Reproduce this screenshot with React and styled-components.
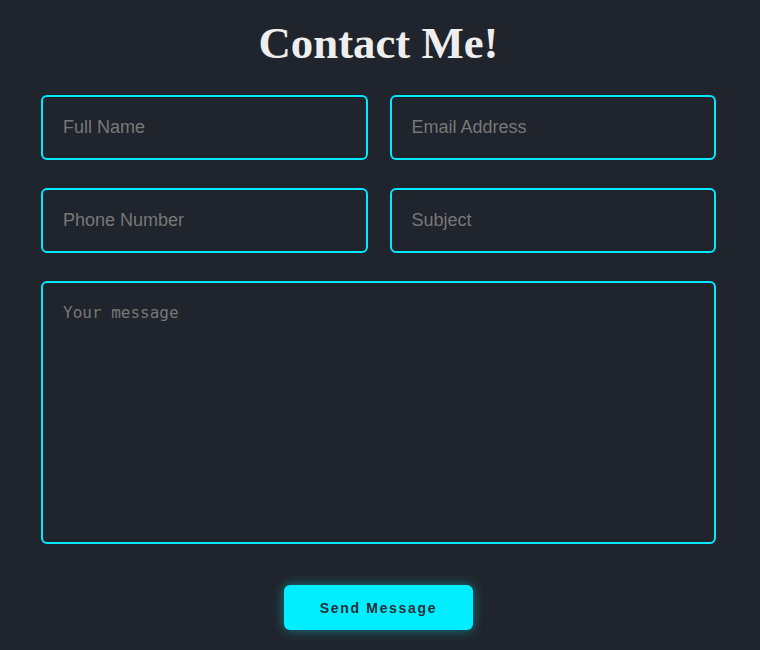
import React from "react";
import styled, { createGlobalStyle } from "styled-components";

const GlobalStyle = createGlobalStyle`
  html, body {
    margin: 0;
    padding: 0;
    background: #20242c;
  }
`;

const Page = styled.div`
  min-height: 650px;
  box-sizing: border-box;
  padding: 0 44px 0 41px;
  background: #20242c;
  overflow: hidden;
`;

const Title = styled.h1`
  margin: 18px 0 26px;
  text-align: center;
  font-family: "Liberation Serif", "Times New Roman", serif;
  font-size: 44.8px;
  line-height: 51px;
  font-weight: 700;
  color: #eeeeee;
`;

const Form = styled.form`
  display: flex;
  flex-direction: column;
  gap: 28px;
`;

const Row = styled.div`
  display: grid;
  grid-template-columns: 1fr 1fr;
  gap: 22px;
`;

const fieldBase = `
  box-sizing: border-box;
  width: 100%;
  border: 2px solid #00eaff;
  border-radius: 6px;
  background: transparent;
  color: #e0e0e0;
  outline: none;
  padding: 20px;
  margin: 0;
  &::placeholder {
    color: #787878;
    opacity: 1;
  }
`;

const Input = styled.input`
  ${fieldBase}
  height: 65px;
  font-family: "Liberation Sans", Arial, sans-serif;
  font-size: 18px;
`;

const TextArea = styled.textarea`
  ${fieldBase}
  display: block;
  height: 263px;
  resize: none;
  font-family: "DejaVu Sans Mono", monospace;
  font-size: 16px;
  line-height: 20px;
`;

const Actions = styled.div`
  display: flex;
  justify-content: center;
  padding-top: 13px;
`;

const SendButton = styled.button`
  width: 189px;
  height: 45px;
  border: none;
  border-radius: 6px;
  background: #00eeff;
  color: #2a2e36;
  font-family: "Liberation Sans", Arial, sans-serif;
  font-size: 14px;
  font-weight: 700;
  letter-spacing: 1.7px;
  box-shadow: 0 0 12px rgba(0, 238, 255, 0.45);
  cursor: pointer;
`;

const fields = [
  [
    { name: "name", type: "text", placeholder: "Full Name" },
    { name: "email", type: "email", placeholder: "Email Address" },
  ],
  [
    { name: "phone", type: "tel", placeholder: "Phone Number" },
    { name: "subject", type: "text", placeholder: "Subject" },
  ],
];

export default function App() {
  return (
    <>
      <GlobalStyle />
      <Page>
        <Title>Contact Me!</Title>
        <Form onSubmit={(e) => e.preventDefault()}>
          {fields.map((row, i) => (
            <Row key={i}>
              {row.map((f) => (
                <Input key={f.name} name={f.name} type={f.type} placeholder={f.placeholder} />
              ))}
            </Row>
          ))}
          <TextArea name="message" placeholder="Your message" />
          <Actions>
            <SendButton type="submit">Send Message</SendButton>
          </Actions>
        </Form>
      </Page>
    </>
  );
}
